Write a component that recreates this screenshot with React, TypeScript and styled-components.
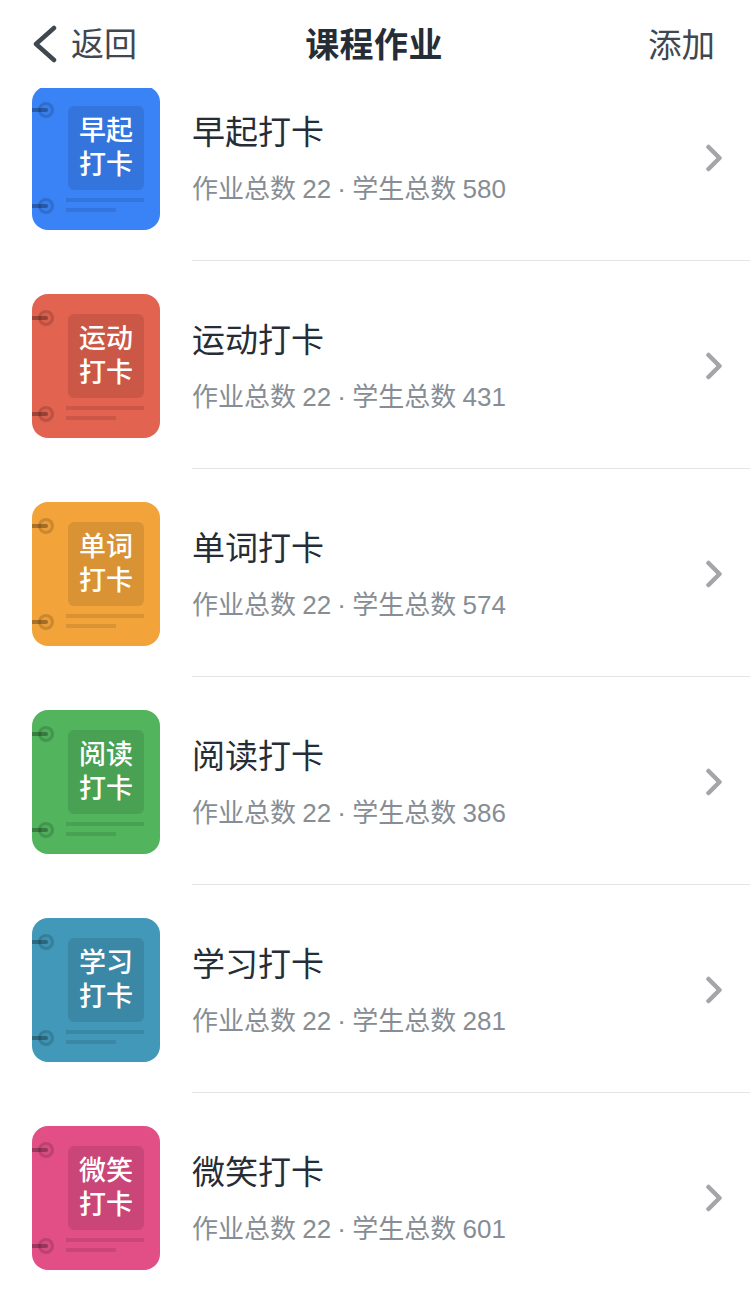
import React from "react";
import styled, { createGlobalStyle } from "styled-components";

const GlobalStyle = createGlobalStyle`
  html, body {
    background: #ffffff;
    margin: 0;
    padding: 0;
  }
  body {
    font-family: "Liberation Sans", "Noto Sans CJK SC", sans-serif;
  }
`;

const Page = styled.div`
  background: #ffffff;
  height: 1294px;
  overflow: hidden;
  width: 750px;
`;

const Header = styled.header`
  align-items: center;
  background: #ffffff;
  box-sizing: border-box;
  display: flex;
  height: 88px;
  justify-content: space-between;
  padding: 0 35px 4px 32px;
  position: relative;
  z-index: 1;
`;

const BackButton = styled.div`
  align-items: center;
  color: #3f4750;
  display: flex;
  font-size: 33px;
  gap: 14px;
  width: 200px;
`;

const BackIcon = styled.svg`
  display: block;
  margin-top: 4px;
`;

const Title = styled.h1`
  color: #252d37;
  font-size: 34px;
  font-weight: 700;
  letter-spacing: 0.4px;
  margin: 0 0 0 1px;
`;

const AddButton = styled.div`
  color: #3f4750;
  font-size: 33.5px;
  text-align: right;
  width: 200px;
`;

const List = styled.div`
  display: flex;
  flex-direction: column;
  margin-top: -35px;
`;

const Row = styled.div`
  display: flex;
  gap: 32px;
  height: 208px;
  padding-left: 32px;
`;

const Cover = styled.div<{ $color: string }>`
  background: ${(p) => p.$color};
  border-radius: 16px;
  flex: none;
  height: 144px;
  margin-top: 33px;
  position: relative;
  width: 128px;
`;

const Ring = styled.span<{ $top: number }>`
  background: rgba(0, 0, 0, 0.03);
  border: 3px solid rgba(0, 0, 0, 0.14);
  border-radius: 50%;
  box-sizing: border-box;
  height: 16px;
  left: 6px;
  position: absolute;
  top: ${(p) => p.$top}px;
  width: 16px;

  &::before {
    background: rgba(0, 0, 0, 0.3);
    border-radius: 0 2px 2px 0;
    content: "";
    height: 4px;
    left: -9px;
    position: absolute;
    top: 3px;
    width: 16px;
  }
`;

const Label = styled.div`
  align-items: center;
  background: rgba(0, 0, 0, 0.1);
  border-radius: 6px;
  color: #ffffff;
  display: flex;
  flex-direction: column;
  font-size: 27px;
  font-weight: 500;
  height: 84px;
  justify-content: center;
  left: 36px;
  line-height: 34px;
  position: absolute;
  top: 20px;
  width: 76px;
`;

const Line = styled.span<{ $top: number; $width: number }>`
  background: rgba(0, 0, 0, 0.1);
  height: 4px;
  left: 34px;
  position: absolute;
  top: ${(p) => p.$top}px;
  width: ${(p) => p.$width}px;
`;

const Body = styled.div`
  align-items: center;
  border-bottom: 1px solid #e4e4e6;
  box-sizing: border-box;
  display: flex;
  flex: 1;
  justify-content: space-between;
  padding: 0 26px 0 0;
`;

const Texts = styled.div`
  display: flex;
  flex-direction: column;
  gap: 16px;
  margin-top: 5px;
`;

const Name = styled.div`
  color: #252d37;
  font-size: 33px;
  line-height: 44px;
`;

const Meta = styled.div`
  color: #868d94;
  font-size: 26px;
  line-height: 36px;
  word-spacing: -1px;
`;

const Chevron = styled.svg`
  display: block;
  margin-top: 3px;
`;

const courses = [
  { top: "早起", color: "#3a83f6", students: 580 },
  { top: "运动", color: "#e2634f", students: 431 },
  { top: "单词", color: "#f2a33a", students: 574 },
  { top: "阅读", color: "#52b45d", students: 386 },
  { top: "学习", color: "#4198b9", students: 281 },
  { top: "微笑", color: "#e14f86", students: 601 },
];

function App() {
  return (
    <Page>
      <GlobalStyle />
      <Header>
        <BackButton>
          <BackIcon width="25" height="40" viewBox="0 0 25 40" fill="none">
            <path d="M22 4 L4 20 L22 36" stroke="#3f4750" strokeWidth="4.5" strokeLinecap="round" strokeLinejoin="round" />
          </BackIcon>
          返回
        </BackButton>
        <Title>课程作业</Title>
        <AddButton>添加</AddButton>
      </Header>
      <List>
        {courses.map((c) => (
          <Row key={c.top}>
            <Cover $color={c.color}>
              <Ring $top={16} />
              <Ring $top={112} />
              <Label>
                <span>{c.top}</span>
                <span>打卡</span>
              </Label>
              <Line $top={112} $width={78} />
              <Line $top={122} $width={50} />
            </Cover>
            <Body>
              <Texts>
                <Name>{c.top}打卡</Name>
                <Meta>作业总数 22 · 学生总数 {c.students}</Meta>
              </Texts>
              <Chevron width="20" height="28" viewBox="0 0 20 28" fill="none">
                <path d="M4.5 3 L15.5 14 L4.5 25" stroke="#a3a5a9" strokeWidth="4.5" strokeLinecap="round" strokeLinejoin="round" />
              </Chevron>
            </Body>
          </Row>
        ))}
      </List>
    </Page>
  );
}

export default App;
